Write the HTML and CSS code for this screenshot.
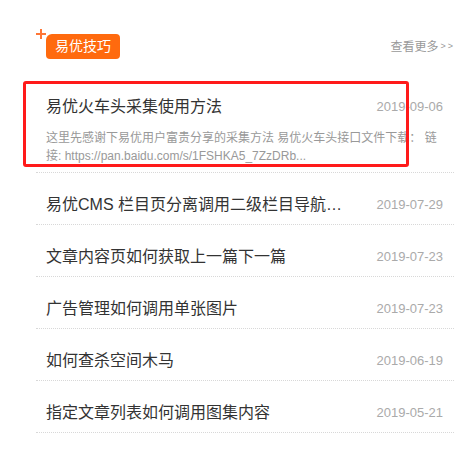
FILE: index.html
```html
<!DOCTYPE html>
<html lang="zh-CN">
<head>
<meta charset="utf-8">
<title>易优技巧</title>
<link rel="stylesheet" href="styles.css">
</head>
<body>
<section class="panel">
  <header class="panel-head">
    <span class="badge"><span class="plus"></span>易优技巧</span>
    <a class="more" href="#">查看更多<span class="arrows">&gt;&gt;</span></a>
  </header>
  <ul class="list">
    <li class="item item-featured">
      <div class="row">
        <a class="title" href="#">易优火车头采集使用方法</a>
        <span class="date">2019-09-06</span>
      </div>
      <p class="desc">这里先感谢下易优用户富贵分享的采集方法 易优火车头接口文件下载： 链接: https://pan.baidu.com/s/1FSHKA5_7ZzDRb...</p>
      <span class="highlight"></span>
    </li>
    <li class="item"><div class="row"><a class="title" href="#">易优CMS 栏目页分离调用二级栏目导航…</a><span class="date">2019-07-29</span></div></li>
    <li class="item"><div class="row"><a class="title" href="#">文章内容页如何获取上一篇下一篇</a><span class="date">2019-07-23</span></div></li>
    <li class="item"><div class="row"><a class="title" href="#">广告管理如何调用单张图片</a><span class="date">2019-07-23</span></div></li>
    <li class="item"><div class="row"><a class="title" href="#">如何查杀空间木马</a><span class="date">2019-06-19</span></div></li>
    <li class="item"><div class="row"><a class="title" href="#">指定文章列表如何调用图集内容</a><span class="date">2019-05-21</span></div></li>
  </ul>
</section>
</body>
</html>
```

FILE: styles.css
```css
* { box-sizing: border-box; }
html, body { margin: 0; padding: 0; background: #fff; }
body {
  font-family: "Liberation Sans", "Noto Sans CJK SC", sans-serif;
  color: #333;
}
a { text-decoration: none; color: inherit; }

.panel {
  width: 418px;
  margin-left: 36px;
}

.panel-head {
  display: flex;
  justify-content: space-between;
  align-items: center;
  padding-top: 34px;
  padding-bottom: 16px;
}

.badge {
  position: relative;
  margin-left: 10px;
  height: 25px;
  padding: 0 9px;
  display: flex;
  align-items: center;
  background: #ff6a0e;
  color: #fff;
  font-size: 14px;
  line-height: 25px;
  border-radius: 6px 4px 4px 4px;
}

.plus {
  position: absolute;
  left: -10px;
  top: -5px;
  width: 10px;
  height: 10px;
}
.plus::before, .plus::after {
  content: "";
  position: absolute;
  background: #ff7636;
}
.plus::before { left: 0; top: 4px; width: 10px; height: 2px; }
.plus::after { left: 4px; top: 0; width: 2px; height: 10px; }

.more {
  display: flex;
  align-items: center;
  font-size: 12px;
  color: #999;
  margin-right: 1px;
  margin-top: -2px;
}

.arrows {
  font-size: 9px;
  letter-spacing: 2px;
  margin-left: 2px;
  margin-right: -2px;
}

.list {
  list-style: none;
  margin: 0;
  padding: 0;
}

.item {
  padding: 20px 10px 7px;
  border-bottom: 1px dotted #d8d8d8;
}

.item-featured {
  position: relative;
}

.row {
  display: flex;
  justify-content: space-between;
  align-items: center;
  height: 24px;
}

.title {
  width: 298px;
  font-size: 16px;
  line-height: 24px;
  color: #333;
  white-space: nowrap;
  overflow: hidden;
  text-overflow: ellipsis;
}

.date {
  font-size: 13px;
  color: #aaa;
  line-height: 24px;
  padding-right: 1px;
}

.desc {
  margin: 10px 0 0;
  font-size: 12px;
  line-height: 18px;
  height: 36px;
  color: #999;
  overflow: hidden;
}

.highlight {
  position: absolute;
  left: -13px;
  top: 6px;
  width: 386px;
  height: 86px;
  border: 3px solid #ff1a1a;
  border-radius: 3px;
  pointer-events: none;
}
```
